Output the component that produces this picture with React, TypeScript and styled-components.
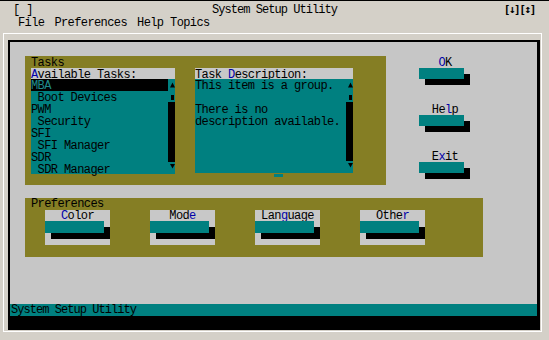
import React from "react";
import styled, { createGlobalStyle } from "styled-components";

const C = {
  beige: "#d4d0c8",
  gray: "#c6c6c6",
  light: "#c8c8c8",
  olive: "#857e24",
  teal: "#008080",
  black: "#000000",
  blue: "#0000a8",
};

const Global = createGlobalStyle`
  html, body { margin: 0; padding: 0; background: ${C.beige}; }
  body {
    width: 549px; height: 340px; overflow: hidden;
    font-family: "Liberation Mono", "DejaVu Sans Mono", monospace;
    font-size: 12px; letter-spacing: -0.6px; color: #000;
  }
  * { box-sizing: border-box; }
`;

const Window = styled.div`
  width: 549px;
  height: 340px;
  border-top: 1px solid ${C.black};
  display: flex;
  flex-direction: column;
`;

const TitleBar = styled.div`
  margin-top: 2px;
  height: 13px;
  line-height: 14px;
  display: grid;
  grid-template-columns: 1fr auto 1fr;
  white-space: pre;
`;

const TitleLeft = styled.span`
  padding-left: 13px;
`;

const TitleText = styled.span`
  letter-spacing: -0.95px;
`;

const TitleRight = styled.span`
  text-align: right;
  padding-right: 14px;
  font-family: "DejaVu Sans Mono", monospace;
  font-weight: bold;
  font-size: 11px;
  letter-spacing: -1.4px;
`;

const MenuBar = styled.div`
  height: 13px;
  line-height: 14px;
  display: flex;
  gap: 10px;
  padding-left: 18px;
`;

const Well = styled.div`
  margin: 4px 6px 0 3px;
  border: 1px solid #ffffff;
  padding: 6px 1px 1px 4px;
  align-self: flex-start;
`;

const Screen = styled.div`
  width: 532px;
  height: 290px;
  border: solid ${C.black};
  border-width: 2px 3px 14px 2px;
  background: ${C.gray};
  display: flex;
  flex-direction: column;
`;

const TopRow = styled.div`
  display: flex;
  align-items: flex-start;
  padding: 14px 0 0 15px;
`;

const Panel = styled.div<{ $w: number; $h: number }>`
  width: ${(p) => p.$w}px;
  height: ${(p) => p.$h}px;
  background: ${C.olive};
  padding-left: 6px;
  display: flex;
  flex-direction: column;
`;

const PanelLabel = styled.div<{ $lh: number }>`
  height: 12px;
  line-height: ${(p) => p.$lh}px;
`;

const ListsRow = styled.div`
  display: flex;
  gap: 20px;
`;

const Box = styled.div<{ $w: number }>`
  position: relative;
  width: ${(p) => p.$w}px;
  display: flex;
  flex-direction: column;
`;

const Notch = styled.div`
  position: absolute;
  left: 79px;
  bottom: -3px;
  width: 9px;
  height: 3px;
  background: ${C.teal};
`;

const BoxHeader = styled.div`
  height: 11px;
  line-height: 14px;
  background: ${C.light};
  white-space: pre;
`;

const BoxBody = styled.div<{ $h: number }>`
  height: ${(p) => p.$h}px;
  background: ${C.teal};
  display: flex;
`;

const Items = styled.div`
  flex: 1;
  display: flex;
  flex-direction: column;
`;

const Row = styled.div<{ $sel?: boolean }>`
  height: 12px;
  line-height: 14px;
  white-space: pre;
  background: ${(p) => (p.$sel ? C.black : "transparent")};
  color: ${(p) => (p.$sel ? "#1f8a8a" : C.black)};
`;

const Scroll = styled.div`
  width: 7px;
  display: flex;
  flex-direction: column;
`;

const ScrollCell = styled.div<{ $h: number }>`
  height: ${(p) => p.$h}px;
  background: ${C.teal};
  display: flex;
`;

const Track = styled.div`
  flex: 1;
  background: ${C.black};
`;

const Key = styled.span`
  color: ${C.blue};
`;

const ButtonCol = styled.div`
  margin-left: 33px;
  width: 52px;
  display: flex;
  flex-direction: column;
  gap: 24px;
`;

const Button = styled.div`
  display: flex;
  flex-direction: column;
`;

const ButtonLabel = styled.div`
  height: 12px;
  line-height: 15px;
  text-align: center;
`;

const Bar = styled.div<{ $w: number; $h: number }>`
  width: ${(p) => p.$w}px;
  height: ${(p) => p.$h}px;
  background: ${C.teal};
  box-shadow: 6px 6px 0 ${C.black};
`;

const PrefWrap = styled.div`
  margin: 13px 0 0 15px;
`;

const PrefRow = styled.div`
  display: flex;
  gap: 40px;
  padding-left: 14px;
`;

const PrefButton = styled.div`
  width: 65px;
  height: 35px;
  background: ${C.light};
  display: flex;
  flex-direction: column;
`;

const PrefLabel = styled.div`
  height: 11px;
  line-height: 13px;
  text-align: center;
`;

const StatusBar = styled.div`
  margin-top: auto;
  height: 12px;
  line-height: 12px;
  background: ${C.teal};
  padding-left: 1px;
  letter-spacing: -0.95px;
`;

const Up = () => (
  <svg width="7" height="12" viewBox="0 0 7 12">
    <polygon points="2,8.5 4.5,3.5 7,8.5" fill="#000" />
  </svg>
);
const Thumb = () => (
  <svg width="7" height="11" viewBox="0 0 7 11">
    <rect x="3" y="4" width="3" height="5" fill="#000" />
  </svg>
);
const Down = () => (
  <svg width="7" height="12" viewBox="0 0 7 12">
    <polygon points="2,2 4.5,6.5 7,2" fill="#000" />
  </svg>
);

const ScrollBar = () => (
  <Scroll>
    <ScrollCell $h={12}>
      <Up />
    </ScrollCell>
    <ScrollCell $h={11}>
      <Thumb />
    </ScrollCell>
    <Track />
    <ScrollCell $h={12}>
      <Down />
    </ScrollCell>
  </Scroll>
);

const tasks = [
  { t: "MBA", sel: true },
  { t: " Boot Devices" },
  { t: "PWM" },
  { t: " Security" },
  { t: "SFI" },
  { t: " SFI Manager" },
  { t: "SDR" },
  { t: " SDR Manager" },
];

const desc = ["This item is a group.", "", "There is no", "description available."];

const sideButtons: [string, string, string][] = [
  ["", "O", "K"],
  ["He", "l", "p"],
  ["E", "x", "it"],
];

const prefButtons: [string, string, string][] = [
  ["", "C", "olor"],
  ["Mod", "e", ""],
  ["Lan", "g", "uage"],
  ["Othe", "r", ""],
];

export default function App() {
  return (
    <>
      <Global />
      <Window>
        <TitleBar>
          <TitleLeft>[ ]</TitleLeft>
          <TitleText>System Setup Utility</TitleText>
          <TitleRight>[↓][↕]</TitleRight>
        </TitleBar>
        <MenuBar>
          <span>File</span>
          <span>Preferences</span>
          <span>Help Topics</span>
        </MenuBar>
        <Well>
          <Screen>
            <TopRow>
              <Panel $w={361} $h={129}>
                <PanelLabel $lh={14}>Tasks</PanelLabel>
                <ListsRow>
                  <Box $w={144}>
                    <BoxHeader>
                      <Key>A</Key>vailable Tasks:
                    </BoxHeader>
                    <BoxBody $h={95}>
                      <Items>
                        {tasks.map((r) => (
                          <Row key={r.t} $sel={r.sel}>
                            {r.t}
                          </Row>
                        ))}
                      </Items>
                      <ScrollBar />
                    </BoxBody>
                  </Box>
                  <Box $w={158}>
                    <BoxHeader>
                      Task <Key>D</Key>escription:
                    </BoxHeader>
                    <BoxBody $h={94}>
                      <Items>
                        {desc.map((d, i) => (
                          <Row key={i}>{d}</Row>
                        ))}
                      </Items>
                      <ScrollBar />
                    </BoxBody>
                    <Notch />
                  </Box>
                </ListsRow>
              </Panel>
              <ButtonCol>
                {sideButtons.map(([a, k, b]) => (
                  <Button key={a + k + b}>
                    <ButtonLabel>
                      {a}
                      <Key>{k}</Key>
                      {b}
                    </ButtonLabel>
                    <Bar $w={45} $h={11} />
                  </Button>
                ))}
              </ButtonCol>
            </TopRow>
            <PrefWrap>
              <Panel $w={458} $h={59}>
                <PanelLabel $lh={12}>Preferences</PanelLabel>
                <PrefRow>
                  {prefButtons.map(([a, k, b]) => (
                    <PrefButton key={a + k + b}>
                      <PrefLabel>
                        {a}
                        <Key>{k}</Key>
                        {b}
                      </PrefLabel>
                      <Bar $w={59} $h={12} />
                    </PrefButton>
                  ))}
                </PrefRow>
              </Panel>
            </PrefWrap>
            <StatusBar>System Setup Utility</StatusBar>
          </Screen>
        </Well>
      </Window>
    </>
  );
}
